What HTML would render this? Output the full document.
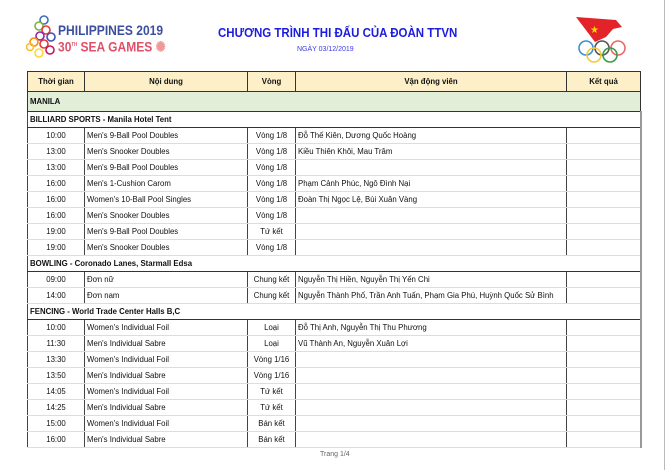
<!DOCTYPE html><html><head><meta charset="utf-8"><style>
body{margin:0;width:666px;height:470px;background:#fff;position:relative;overflow:hidden;font-family:"Liberation Sans",sans-serif;}
.edge{position:absolute;left:664px;top:0;width:1px;height:470px;background:#bbb}
table{position:absolute;left:27px;top:71px;border-collapse:collapse;table-layout:fixed;width:613px;font-size:7.8px;color:#111}
td{padding:0 2px;white-space:nowrap;overflow:hidden;border-left:1px solid #444;border-right:1px solid #444;border-bottom:1px solid #ddd;height:15px;line-height:15px}
tr.h td{background:#fdf0c8;height:19px;font-weight:bold;text-align:center;border:1px solid #333}
tr.m td{background:#e3eed9;height:19px;font-weight:bold;border:1px solid #333}
tr.s td{font-weight:bold;border-bottom:1px solid #333;border-top:1px solid #333}
td.c{text-align:center}
td.k{border-right:2px solid #999}
.lg{position:absolute;left:58px;font-weight:bold;font-size:14px;line-height:14px;transform:scaleX(0.86);transform-origin:0 0;white-space:nowrap}
</style></head><body>
<div class="edge"></div>
<svg style="position:absolute;left:26px;top:12px" width="40" height="48" viewBox="0 0 40 48" fill="none" stroke-width="1.6">
<circle cx="18" cy="8" r="4" stroke="#3f6fb5"/><circle cx="13" cy="14" r="4" stroke="#7cb342"/><circle cx="20" cy="18" r="4" stroke="#e53935"/><circle cx="25" cy="25" r="4" stroke="#3f51b5"/><circle cx="14" cy="24" r="4" stroke="#8e24aa"/><circle cx="8" cy="30" r="4" stroke="#fb8c00"/><circle cx="18" cy="32" r="4" stroke="#e53935"/><circle cx="24" cy="38" r="4" stroke="#c2185b"/><circle cx="13" cy="41" r="4" stroke="#fdd835"/><circle cx="4" cy="35" r="3.5" stroke="#fbc02d"/>
</svg>
<div class="lg" style="top:23px;color:#3c4f9e">PHILIPPINES 2019</div>
<div class="lg" style="top:38px;color:#e0506a">30<sup style="font-size:5px">TH</sup> SEA GAMES <span style="color:#e99">✺</span></div>
<div style="position:absolute;left:218px;top:26px;font:bold 12.5px 'Liberation Sans',sans-serif;color:#1c1ce0;transform:scaleX(0.92);transform-origin:0 0;white-space:nowrap">CHƯƠNG TRÌNH THI ĐẤU CỦA ĐOÀN TTVN</div>
<div style="position:absolute;left:297px;top:46px;font-size:7px;color:#3a3ae0">NGÀY 03/12/2019</div>
<svg style="position:absolute;left:573px;top:15px" width="60" height="50" viewBox="0 0 60 50" fill="none" stroke-width="1.6">
<path d="M3 2 L43 5 L49 12 L40 14 L33 22 L22 27 Z" fill="#e4222a" stroke="none"/>
<text x="17" y="18" font-size="10" fill="#ffd500" stroke="none">★</text>
<circle cx="13" cy="33" r="7" stroke="#3b8fd6"/><circle cx="29" cy="33" r="7" stroke="#555"/><circle cx="45" cy="33" r="7" stroke="#e66"/><circle cx="21" cy="40" r="7" stroke="#f3c93b"/><circle cx="37" cy="40" r="7" stroke="#3a9a4a"/>
</svg>
<table>
<colgroup><col style="width:57px"><col style="width:163px"><col style="width:48px"><col style="width:271px"><col style="width:74px"></colgroup>
<tr class="h"><td>Thời gian</td><td>Nội dung</td><td>Vòng</td><td>Vận động viên</td><td class="k">Kết quả</td></tr>
<tr class="m"><td colspan="5" class="k">MANILA</td></tr>
<tr class="s"><td colspan="5" class="k">BILLIARD SPORTS - Manila Hotel Tent</td></tr>
<tr><td class="c">10:00</td><td>Men's 9-Ball Pool Doubles</td><td class="c">Vòng 1/8</td><td>Đỗ Thế Kiên, Dương Quốc Hoàng</td><td class="k"></td></tr>
<tr><td class="c">13:00</td><td>Men's Snooker Doubles</td><td class="c">Vòng 1/8</td><td>Kiều Thiên Khôi, Mau Trâm</td><td class="k"></td></tr>
<tr><td class="c">13:00</td><td>Men's 9-Ball Pool Doubles</td><td class="c">Vòng 1/8</td><td></td><td class="k"></td></tr>
<tr><td class="c">16:00</td><td>Men's 1-Cushion Carom</td><td class="c">Vòng 1/8</td><td>Phạm Cảnh Phúc, Ngô Đình Nại</td><td class="k"></td></tr>
<tr><td class="c">16:00</td><td>Women's 10-Ball Pool Singles</td><td class="c">Vòng 1/8</td><td>Đoàn Thị Ngọc Lệ, Bùi Xuân Vàng</td><td class="k"></td></tr>
<tr><td class="c">16:00</td><td>Men's Snooker Doubles</td><td class="c">Vòng 1/8</td><td></td><td class="k"></td></tr>
<tr><td class="c">19:00</td><td>Men's 9-Ball Pool Doubles</td><td class="c">Tứ kết</td><td></td><td class="k"></td></tr>
<tr><td class="c">19:00</td><td>Men's Snooker Doubles</td><td class="c">Vòng 1/8</td><td></td><td class="k"></td></tr>
<tr class="s"><td colspan="5" class="k">BOWLING - Coronado Lanes, Starmall Edsa</td></tr>
<tr><td class="c">09:00</td><td>Đơn nữ</td><td class="c">Chung kết</td><td>Nguyễn Thị Hiền, Nguyễn Thị Yến Chi</td><td class="k"></td></tr>
<tr><td class="c">14:00</td><td>Đơn nam</td><td class="c">Chung kết</td><td>Nguyễn Thành Phố, Trần Anh Tuấn, Phạm Gia Phú, Huỳnh Quốc Sử Bình</td><td class="k"></td></tr>
<tr class="s"><td colspan="5" class="k">FENCING - World Trade Center Halls B,C</td></tr>
<tr><td class="c">10:00</td><td>Women's Individual Foil</td><td class="c">Loại</td><td>Đỗ Thị Anh, Nguyễn Thị Thu Phương</td><td class="k"></td></tr>
<tr><td class="c">11:30</td><td>Men's Individual Sabre</td><td class="c">Loại</td><td>Vũ Thành An, Nguyễn Xuân Lợi</td><td class="k"></td></tr>
<tr><td class="c">13:30</td><td>Women's Individual Foil</td><td class="c">Vòng 1/16</td><td></td><td class="k"></td></tr>
<tr><td class="c">13:50</td><td>Men's Individual Sabre</td><td class="c">Vòng 1/16</td><td></td><td class="k"></td></tr>
<tr><td class="c">14:05</td><td>Women's Individual Foil</td><td class="c">Tứ kết</td><td></td><td class="k"></td></tr>
<tr><td class="c">14:25</td><td>Men's Individual Sabre</td><td class="c">Tứ kết</td><td></td><td class="k"></td></tr>
<tr><td class="c">15:00</td><td>Women's Individual Foil</td><td class="c">Bán kết</td><td></td><td class="k"></td></tr>
<tr><td class="c">16:00</td><td>Men's Individual Sabre</td><td class="c">Bán kết</td><td></td><td class="k"></td></tr>
</table>
<div style="position:absolute;left:320px;top:451px;font-size:7px;color:#666">Trang 1/4</div>
</body></html>
